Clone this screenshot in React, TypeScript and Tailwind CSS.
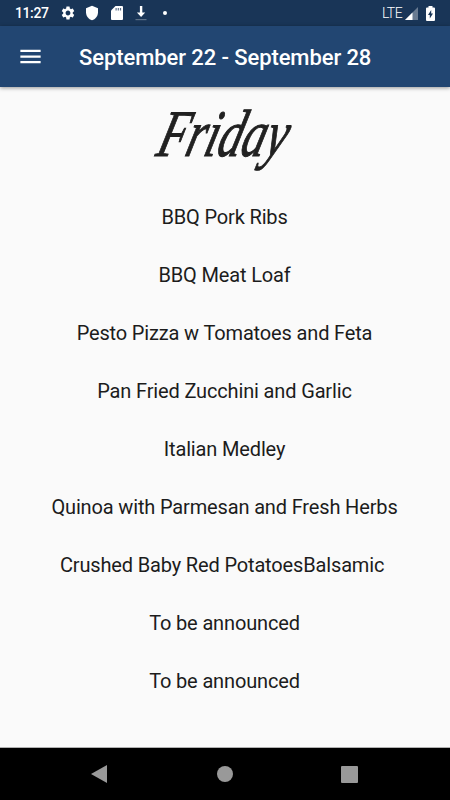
import { MdSettings, MdShield, MdMenu } from 'react-icons/md';

const meals = [
  'BBQ Pork Ribs',
  'BBQ Meat Loaf',
  'Pesto Pizza w Tomatoes and Feta',
  'Pan Fried Zucchini and Garlic',
  'Italian Medley',
  'Quinoa with Parmesan and Fresh Herbs',
  'Crushed Baby Red PotatoesBalsamic ',
  'To be announced',
  'To be announced',
];

function StatusBar() {
  return (
    <div className="flex h-[26px] shrink-0 items-center justify-between bg-[#193557] pl-[15px] pr-[15px] text-white">
      <div className="flex items-center">
        <span className="w-[45px] whitespace-nowrap text-[14px] font-medium leading-none tracking-[-0.4px]">11:27</span>
        <MdSettings className="h-4 w-4" />
        <MdShield className="ml-2 h-4 w-4" />
        <svg className="ml-[11px] h-[14px] w-3" viewBox="0 0 12 14" fill="currentColor">
          <path d="M4.5 0H11a1 1 0 0 1 1 1v12a1 1 0 0 1-1 1H1a1 1 0 0 1-1-1V4.5z" />
          <path d="M4.5 2h1.2v2.5H4.5zM6.7 2h1.2v2.5H6.7zM8.9 2h1.2v2.5H8.9z" fill="#193557" opacity=".7" />
        </svg>
        <svg className="ml-3 h-4 w-3" viewBox="0 0 12 16" fill="currentColor">
          <path d="M4.9 1h2.4v6.5h2.9L6.1 12 1.9 7.5h3z" />
          <path d="M.5 14h11v1.2H.5z" opacity=".3" />
        </svg>
        <span className="ml-4 h-1 w-1 rounded-full bg-white" />
      </div>
      <div className="flex items-center">
        <span className="text-[14px] font-light leading-none tracking-[-0.6px]">LTE</span>
        <svg className="ml-[3px] h-[13px] w-[13px]" viewBox="0 0 13 13" fill="currentColor">
          <path d="M0 13 13 0v13z" opacity=".35" />
          <path d="M0 13 7.5 5.5V13z" />
        </svg>
        <svg className="ml-2 h-[15px] w-[9px]" viewBox="0 0 9 15" fill="currentColor">
          <path d="M2.5 0h4v1.5H8a1 1 0 0 1 1 1V14a1 1 0 0 1-1 1H1a1 1 0 0 1-1-1V2.5a1 1 0 0 1 1-1h1.5z" />
          <path d="M5.2 4v3.5H7L3.8 12.5V9H2z" fill="#193557" />
        </svg>
      </div>
    </div>
  );
}

function AppBar() {
  return (
    <div className="relative flex h-[61px] shrink-0 items-center bg-[#224672] pl-[17px] text-white shadow-[0_1px_4px_rgba(0,0,0,0.4)]">
      <MdMenu className="h-[27px] w-[27px]" />
      <h1 className="ml-[35px] mt-[2px] whitespace-nowrap text-[22px] font-medium tracking-[-0.09px]">
        September 22 - September 28
      </h1>
    </div>
  );
}

function NavBar() {
  return (
    <div className="flex h-[53px] shrink-0 items-center justify-between border-t border-[#b0b0b0] bg-black pl-[91px] pr-[92px] text-[#999999]">
      <svg className="h-[18px] w-4" viewBox="0 0 16 18" fill="currentColor">
        <path d="M0 9 16 0v18z" />
      </svg>
      <span className="ml-px h-4 w-4 rounded-full bg-[#999999]" />
      <span className="h-[17px] w-[17px] rounded-[1px] bg-[#999999]" />
    </div>
  );
}

export default function App() {
  return (
    <div className="flex h-[800px] w-[450px] flex-col overflow-hidden bg-[#fafafa] font-['Roboto',sans-serif]">
      <StatusBar />
      <AppBar />
      <main className="flex flex-1 flex-col">
        <div className="flex h-[101px] items-center justify-center pb-[7px]">
          <h2 className="[transform:scale(0.91,1.28)_skewX(-21deg)] font-['Liberation_Serif',serif] text-[52px] italic leading-none text-[#212121] [-webkit-text-stroke:0.8px_#212121]">
            Friday
          </h2>
        </div>
        {meals.map((meal, i) => (
          <p key={i} className="h-[58px] whitespace-pre pr-px text-center text-[20px] leading-[59px] tracking-[-0.15px] text-[#1c1c1c]">
            {meal}
          </p>
        ))}
      </main>
      <NavBar />
    </div>
  );
}
